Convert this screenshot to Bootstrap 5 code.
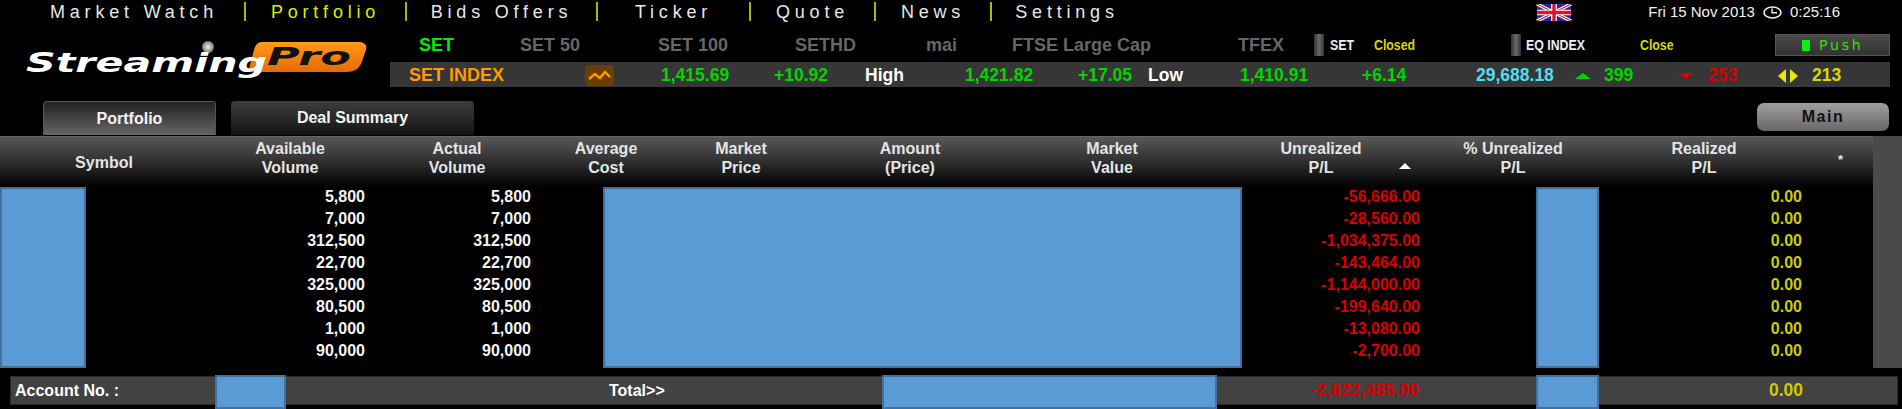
<!DOCTYPE html>
<html lang="en">
<head>
  <meta charset="UTF-8">
  <meta name="viewport" content="width=device-width, initial-scale=1.0">
  <title>Streaming Pro - Portfolio</title>
  <link rel="stylesheet" href="https://cdn.jsdelivr.net/npm/bootstrap@5.3.0/dist/css/bootstrap.min.css">
  <style>
    body {
      background: #000;
      color: #fff;
      font-family: "Liberation Sans", Arial, sans-serif;
      overflow: hidden;
      height: 409px;
    }
    .top-nav { height: 28px; padding-left: 24px; }
    .nav-cells { display: grid; grid-template-columns: 222px 161px 191px 153px 125px 116px 150px; }
    .nav-cell {
      height: 19px;
      margin-top: 2px;
      line-height: 20px;
      text-align: center;
      font-size: 18px;
      letter-spacing: 4.8px;
      color: #e8e8e8;
      border-right: 2px solid #a3bd00;
      white-space: nowrap;
    }
    .nav-cell.active { color: #d8f000; }
    .nav-cell:last-child { border-right: 0; }
    .clock-box { font-size: 15px; color: #f2f2f2; padding-right: 62px; height: 24px; }
    .flag-icon { margin-right: 76px; }

    .logo-box { width: 390px; height: 59px; }
    .market-area { width: 1500px; }
    .index-tabs {
      height: 34px;
      padding-left: 29px;
      display: grid;
      grid-template-columns: 101px 138px 137px 131px 86px 226px 76px 16px 44px 137px 15px 114px 135px 115px;
      align-items: center;
      font-size: 18px;
      font-weight: bold;
      color: #666;
      white-space: nowrap;
    }
    .index-tabs .on { color: #00ee00; }
    .small-lbl { font-size: 14px; color: #eee; transform: scaleX(.88); transform-origin: left; }
    .small-lbl.warn { color: #d8d800; }
    .toggle-box {
      width: 10px;
      height: 22px;
      background: linear-gradient(90deg, #333, #6a6a6a 50%, #333);
    }
    .push-btn {
      height: 22px;
      width: 115px;
      padding-left: 26px;
      background: linear-gradient(#4a4a4a, #333);
      border: 1px solid #1c1c1c;
      outline: 1px solid #555;
      outline-offset: -1px;
      color: #33e000;
      font-family: "DejaVu Sans", sans-serif;
      font-size: 14px;
      letter-spacing: 2.8px;
      line-height: 20px;
    }
    .push-dot { width: 8px; height: 11px; background: #11ee11; margin-right: 9px; }
    .index-bar {
      height: 25px;
      padding-left: 19px;
      background: #363636;
      display: grid;
      grid-template-columns: 176px 76px 113px 91px 100px 113px 70px 92px 122px 114px 99px 29px 74px 30px 70px 34px 1fr;
      align-items: center;
      font-size: 17.5px;
      font-weight: bold;
      color: #00d400;
      white-space: nowrap;
    }
    .index-bar .orange { color: #ff9a00; font-size: 18px; }
    .index-bar .label-w { color: #fff; }
    .index-bar .cyan { color: #55dcf0; }
    .index-bar .red { color: #d80000; }
    .index-bar .yel { color: #d8d800; }
    .trend-icon { display: block; }

    .tab-row { height: 49px; padding: 14px 13px 0 43px; }
    .tab-btn {
      height: 34px;
      line-height: 33px;
      text-align: center;
      font-size: 16px;
      font-weight: bold;
      border-radius: 4px 4px 0 0;
      color: #f4f4f4;
    }
    .tab-on { width: 173px; background: linear-gradient(#222, #666); border: 1px solid #555; border-bottom: 0; margin-top: 0; }
    .tab-off { width: 243px; margin-left: 15px; background: linear-gradient(#3c3c3c, #141414); }
    .main-btn {
      width: 132px;
      height: 28px;
      margin-top: 2px;
      line-height: 27px;
      text-align: center;
      border-radius: 7px;
      background: linear-gradient(#a0a0a0, #666);
      color: #111;
      font-size: 16px;
      font-weight: bold;
      letter-spacing: 1.5px;
    }

    .grid-area { width: 1873px; }
    .scroll-side { width: 29px; height: 232px; background: #4a4a4a; }
    .port-head {
      height: 51px;
      display: grid;
      grid-template-columns: 208px 164px 170px 128px 142px 196px 208px 210px 174px 208px 65px;
      align-items: center;
      text-align: center;
      font-size: 16px;
      font-weight: bold;
      line-height: 19px;
      color: #e4e4e4;
      background: linear-gradient(#585858, #2a2a2a 55%, #000);
      border-top: 1px solid #666;
    }
    .port-head .two-line { padding-bottom: 8px; }
    .port-head .star-cell { font-size: 13px; padding-bottom: 6px; }
    .sort-cell { position: relative; }
    .sort-arrow {
      position: absolute;
      right: 15px;
      top: 24px;
      width: 0;
      height: 0;
      border-left: 6px solid transparent;
      border-right: 6px solid transparent;
      border-bottom: 6px solid #fff;
    }
    .port-body {
      height: 181px;
      display: grid;
      grid-template-columns: 86px 279px 166px 72px 639px 178px 116px 63px 203px;
      grid-template-rows: repeat(8, 22px) 5px;
      font-size: 16px;
      font-weight: bold;
      line-height: 20px;
      text-align: right;
    }
    .mask-box {
      background: #5b9bd5;
      border: 2px solid #41719c;
    }
    .mask-a, .mask-b, .mask-c { grid-row: 1 / span 9; }
    .mask-a { grid-column: 1; }
    .mask-b { grid-column: 5; }
    .mask-c { grid-column: 8; }
    .c-avail { grid-column: 2; color: #f4f4f4; }
    .c-actual { grid-column: 3; color: #f4f4f4; }
    .c-unreal { grid-column: 6; color: #d80000; }
    .c-real { grid-column: 9; color: #cccc00; }

    .foot-row {
      height: 29px;
      margin: 8px 4px 0 10px;
      background: #424242;
      box-shadow: inset 0 0 0 1px #2a2a2a;
      display: grid;
      grid-template-columns: 205px 71px 596px 335px 319px 63px 299px;
      grid-template-rows: 29px;
      align-items: center;
      font-weight: bold;
      font-size: 16px;
    }
    .foot-row .acc { padding-left: 5px; }
    .foot-row .mask-box { height: 34px; margin-top: -1px; align-self: start; }
    .foot-total { padding-left: 323px; }
    .foot-red { text-align: right; padding-right: 117px; color: #d80000; font-size: 17.5px; }
    .foot-yel { text-align: right; padding-right: 95px; color: #cccc00; font-size: 17.5px; }
  </style>
</head>
<body>
  <!-- top menu -->
  <div class="top-nav d-flex justify-content-between">
    <div class="nav-cells">
      <div class="nav-cell">Market Watch</div>
      <div class="nav-cell active">Portfolio</div>
      <div class="nav-cell">Bids Offers</div>
      <div class="nav-cell">Ticker</div>
      <div class="nav-cell">Quote</div>
      <div class="nav-cell">News</div>
      <div class="nav-cell">Settings</div>
    </div>
    <div class="clock-box d-flex align-items-center">
      <svg class="flag-icon" width="36" height="17" viewBox="0 0 60 30">
        <rect width="60" height="30" fill="#1a2a9a"/>
        <path d="M0 0L60 30M60 0L0 30" stroke="#fff" stroke-width="6"/>
        <path d="M0 0L60 30M60 0L0 30" stroke="#e8102a" stroke-width="2"/>
        <path d="M30 0V30M0 15H60" stroke="#fff" stroke-width="10"/>
        <path d="M30 0V30M0 15H60" stroke="#e8102a" stroke-width="6"/>
      </svg>
      <span>Fri 15 Nov 2013</span>
      <svg class="mx-2" width="19" height="13" viewBox="0 0 19 13">
        <ellipse cx="9.5" cy="6.5" rx="8.5" ry="5.5" fill="none" stroke="#f2f2f2" stroke-width="1.6"/>
        <path d="M9 2.5V6.8H14" fill="none" stroke="#f2f2f2" stroke-width="1.4"/>
      </svg>
      <span>0:25:16</span>
    </div>
  </div>

  <!-- logo and index strip -->
  <div class="d-flex">
    <div class="logo-box">
      <svg width="390" height="59" viewBox="0 0 390 59">
        <defs>
          <linearGradient id="pillFill" x1="0" y1="0" x2="0" y2="1">
            <stop offset="0" stop-color="#ff9a1a"/>
            <stop offset="1" stop-color="#e86a00"/>
          </linearGradient>
          <radialGradient id="ballFill">
            <stop offset="0" stop-color="#eee"/>
            <stop offset="1" stop-color="#777"/>
          </radialGradient>
        </defs>
        <path d="M262 14H358Q368 14 366 22L361 36Q357 44 347 44H248L254 22Q256 14 262 14Z" fill="url(#pillFill)"/>
        <circle cx="208" cy="19" r="6" fill="url(#ballFill)"/>
        <text x="267" y="37" textLength="84" lengthAdjust="spacingAndGlyphs" font-family="DejaVu Sans" font-weight="bold" font-style="italic" font-size="24" fill="#111">Pro</text>
        <text x="26" y="44" textLength="241" lengthAdjust="spacingAndGlyphs" font-family="DejaVu Sans" font-weight="bold" font-style="italic" font-size="26" fill="#fff">Streaming</text>
      </svg>
    </div>
    <div class="market-area">
      <div class="index-tabs">
        <span class="on">SET</span>
        <span>SET 50</span>
        <span>SET 100</span>
        <span>SETHD</span>
        <span>mai</span>
        <span>FTSE Large Cap</span>
        <span>TFEX</span>
        <span class="toggle-box"></span>
        <span class="small-lbl">SET</span>
        <span class="small-lbl warn">Closed</span>
        <span class="toggle-box"></span>
        <span class="small-lbl">EQ INDEX</span>
        <span class="small-lbl warn">Close</span>
        <div class="push-btn d-flex align-items-center fw-normal"><span class="push-dot"></span>Push</div>
      </div>
      <div class="index-bar">
        <span class="orange">SET INDEX</span>
        <svg class="trend-icon" width="29" height="21" viewBox="0 0 29 21">
          <rect width="29" height="21" rx="4" fill="#6b3d00"/>
          <path d="M4 14L10 9L15 13L20 7L25 12" fill="none" stroke="#ff9a00" stroke-width="2.4"/>
        </svg>
        <span>1,415.69</span>
        <span>+10.92</span>
        <span class="label-w">High</span>
        <span>1,421.82</span>
        <span>+17.05</span>
        <span class="label-w">Low</span>
        <span>1,410.91</span>
        <span>+6.14</span>
        <span class="cyan">29,688.18</span>
        <svg width="16" height="8" viewBox="0 0 16 8"><path d="M8 1L16 7H0Z" fill="#00d400"/></svg>
        <span>399</span>
        <svg width="16" height="8" viewBox="0 0 16 8"><path d="M0 1H16L8 7Z" fill="#d80000"/></svg>
        <span class="red">253</span>
        <svg width="20" height="14" viewBox="0 0 20 14"><path d="M8 0V14L0 7ZM12 0L20 7L12 14Z" fill="#e8e800"/></svg>
        <span class="yel">213</span>
      </div>
    </div>
  </div>

  <!-- tabs -->
  <div class="tab-row d-flex">
    <div class="tab-btn tab-on">Portfolio</div>
    <div class="tab-btn tab-off">Deal Summary</div>
    <div class="main-btn ms-auto">Main</div>
  </div>

  <!-- portfolio table -->
  <div class="d-flex">
    <div class="grid-area">
      <div class="port-head">
        <div>Symbol</div>
        <div class="two-line">Available<br>Volume</div>
        <div class="two-line">Actual<br>Volume</div>
        <div class="two-line">Average<br>Cost</div>
        <div class="two-line">Market<br>Price</div>
        <div class="two-line">Amount<br>(Price)</div>
        <div class="two-line">Market<br>Value</div>
        <div class="two-line sort-cell">Unrealized<br>P/L<span class="sort-arrow"></span></div>
        <div class="two-line">% Unrealized<br>P/L</div>
        <div class="two-line">Realized<br>P/L</div>
        <div class="star-cell">*</div>
      </div>
      <div class="port-body">
        <div class="mask-box mask-a"></div>
        <div class="mask-box mask-b"></div>
        <div class="mask-box mask-c"></div>

        <div class="c-avail">5,800</div><div class="c-actual">5,800</div><div class="c-unreal">-56,666.00</div><div class="c-real">0.00</div>
        <div class="c-avail">7,000</div><div class="c-actual">7,000</div><div class="c-unreal">-28,560.00</div><div class="c-real">0.00</div>
        <div class="c-avail">312,500</div><div class="c-actual">312,500</div><div class="c-unreal">-1,034,375.00</div><div class="c-real">0.00</div>
        <div class="c-avail">22,700</div><div class="c-actual">22,700</div><div class="c-unreal">-143,464.00</div><div class="c-real">0.00</div>
        <div class="c-avail">325,000</div><div class="c-actual">325,000</div><div class="c-unreal">-1,144,000.00</div><div class="c-real">0.00</div>
        <div class="c-avail">80,500</div><div class="c-actual">80,500</div><div class="c-unreal">-199,640.00</div><div class="c-real">0.00</div>
        <div class="c-avail">1,000</div><div class="c-actual">1,000</div><div class="c-unreal">-13,080.00</div><div class="c-real">0.00</div>
        <div class="c-avail">90,000</div><div class="c-actual">90,000</div><div class="c-unreal">-2,700.00</div><div class="c-real">0.00</div>
      </div>
    </div>
    <div class="scroll-side"></div>
  </div>

  <!-- totals -->
  <div class="foot-row">
    <div class="acc">Account No. :</div>
    <div class="mask-box"></div>
    <div class="foot-total">Total&gt;&gt;</div>
    <div class="mask-box"></div>
    <div class="foot-red">-2,622,485.00</div>
    <div class="mask-box"></div>
    <div class="foot-yel">0.00</div>
  </div>

  <script src="https://cdn.jsdelivr.net/npm/bootstrap@5.3.0/dist/js/bootstrap.bundle.min.js"></script>
</body>
</html>
